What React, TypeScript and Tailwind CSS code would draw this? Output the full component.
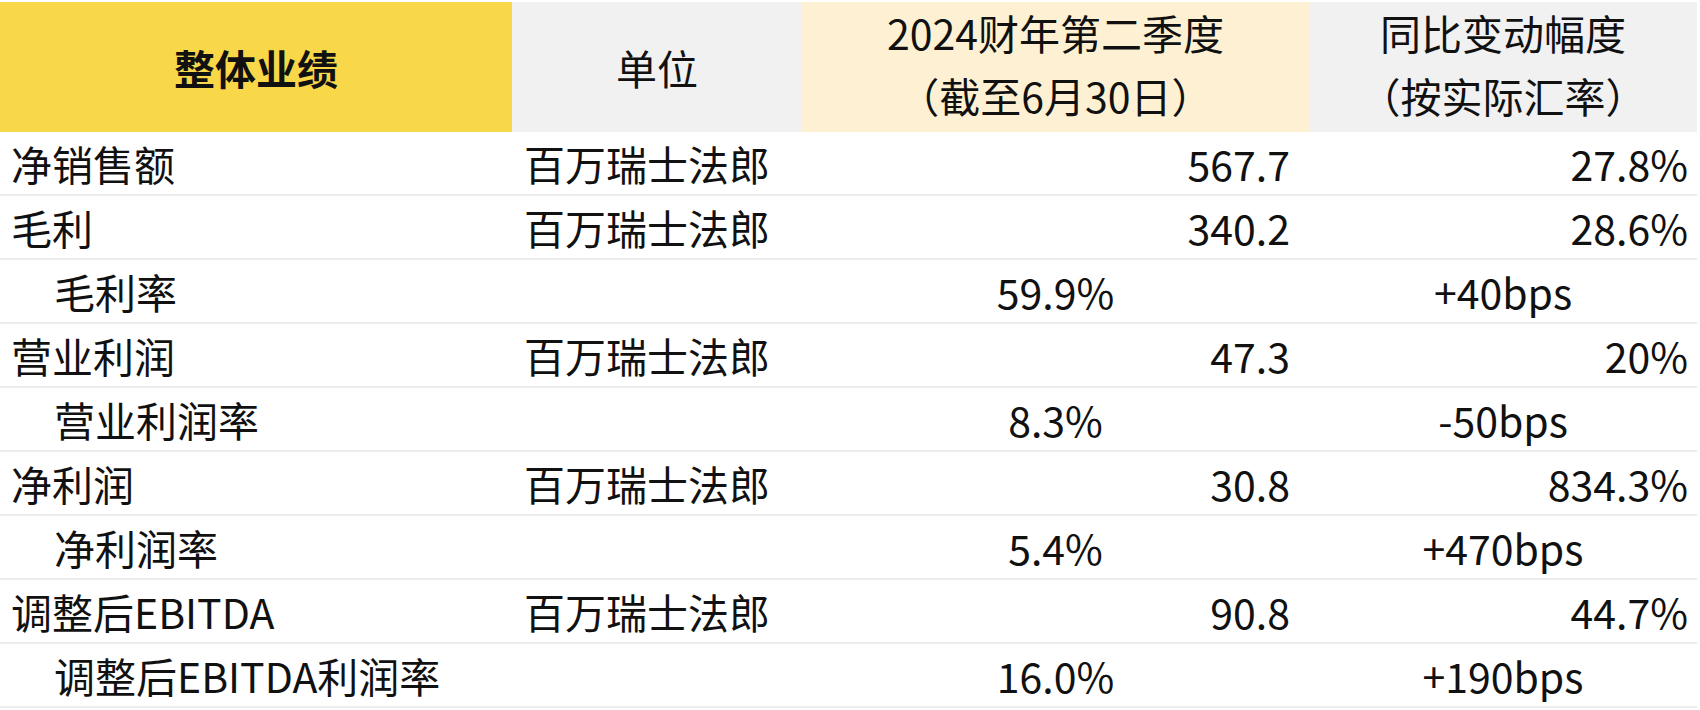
import { FC } from 'react';

type Row = {
  label: string;
  unit?: string;
  value: string;
  change: string;
  sub?: boolean;
};

const ROWS: Row[] = [
  { label: '净销售额', unit: '百万瑞士法郎', value: '567.7', change: '27.8%' },
  { label: '毛利', unit: '百万瑞士法郎', value: '340.2', change: '28.6%' },
  { label: '毛利率', value: '59.9%', change: '+40bps', sub: true },
  { label: '营业利润', unit: '百万瑞士法郎', value: '47.3', change: '20%' },
  { label: '营业利润率', value: '8.3%', change: '-50bps', sub: true },
  { label: '净利润', unit: '百万瑞士法郎', value: '30.8', change: '834.3%' },
  { label: '净利润率', value: '5.4%', change: '+470bps', sub: true },
  { label: '调整后EBITDA', unit: '百万瑞士法郎', value: '90.8', change: '44.7%' },
  { label: '调整后EBITDA利润率', value: '16.0%', change: '+190bps', sub: true },
];

const App: FC = () => {
  return (
    <div className="min-h-screen bg-white pt-[2px] text-[41px] leading-none text-[#111] [font-family:'Noto_Sans_CJK_SC','Noto_Sans',sans-serif]">
      <div className="w-[1697px]">
        {/* header */}
        <div className="grid h-[130px] grid-cols-[512px_290px_507px_388px]">
          <div className="flex items-center justify-center bg-[#f8d748] font-bold">整体业绩</div>
          <div className="flex items-center justify-center bg-[#f1f1f1]">单位</div>
          <div className="flex flex-col items-center justify-center gap-[22px] bg-[#fef1d3] pb-[7px]">
            <span>2024财年第二季度</span>
            <span>（截至6月30日）</span>
          </div>
          <div className="flex flex-col items-center justify-center gap-[22px] bg-[#f1f1f1] pb-[7px]">
            <span>同比变动幅度</span>
            <span>（按实际汇率）</span>
          </div>
        </div>

        {ROWS.map((row) => (
          <div
            key={row.label}
            className="grid h-[64px] grid-cols-[512px_290px_507px_388px] border-b-2 border-[#ececec]"
          >
            <div className={row.sub ? 'flex items-center pl-[54px]' : 'flex items-center pl-[11px]'}>
              {row.label}
            </div>
            <div className="flex items-center pl-[12px]">{row.unit}</div>
            <div className={row.sub ? 'flex items-center justify-center' : 'flex items-center justify-end pr-[19px]'}>
              {row.value}
            </div>
            <div className={row.sub ? 'flex items-center justify-center' : 'flex items-center justify-end pr-[9px]'}>
              {row.change}
            </div>
          </div>
        ))}
      </div>
    </div>
  );
};

export default App;
